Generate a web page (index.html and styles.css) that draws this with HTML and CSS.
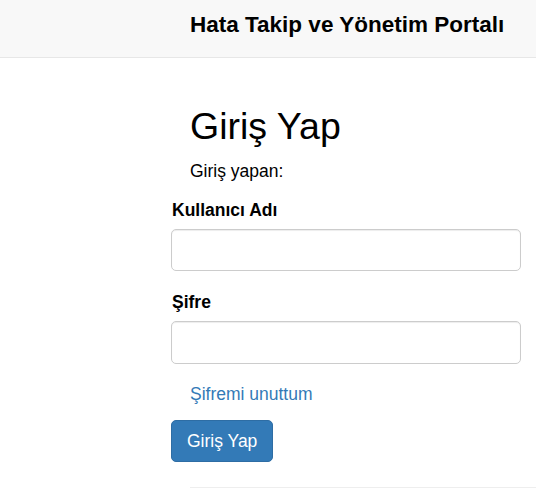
FILE: index.html
```html
<!DOCTYPE html>
<html lang="tr">
<head>
<meta charset="utf-8">
<title>Giriş Yap</title>
<link rel="stylesheet" href="styles.css">
</head>
<body>
<header class="navbar">
  <a class="brand" href="#">Hata Takip ve Yönetim Portalı</a>
</header>
<main class="content">
  <h2 class="title">Giriş Yap</h2>
  <p class="sub">Giriş yapan:</p>
  <form class="form">
    <div class="form-group">
      <label class="label" for="user">Kullanıcı Adı</label>
      <input class="input" id="user" type="text">
    </div>
    <div class="form-group">
      <label class="label" for="pass">Şifre</label>
      <input class="input" id="pass" type="password">
    </div>
    <p class="forgot"><a href="#" class="link">Şifremi unuttum</a></p>
    <button class="btn" type="button">Giriş Yap</button>
  </form>
  <hr class="rule">
</main>
</body>
</html>
```

FILE: styles.css
```css
* { box-sizing: border-box; }
html, body { margin: 0; padding: 0; }
body {
  font-family: "Liberation Sans", Arial, sans-serif;
  font-size: 17.5px;
  line-height: 25px;
  color: #000;
  background: #fff;
  overflow: hidden;
}
.navbar {
  height: 58px;
  background: #f8f8f8;
  border-bottom: 1px solid #e7e7e7;
  padding: 12px 0 0 190px;
}
.brand {
  display: block;
  font-size: 22.5px;
  font-weight: bold;
  line-height: 25px;
  color: #000;
  text-decoration: none;
}
.content {
  padding: 0 15px 0 171px;
}
.title {
  margin: 47.5px 0 12.5px 19px;
  font-size: 37.5px;
  line-height: 41.25px;
  font-weight: normal;
}
.sub {
  margin: 0 0 13.5px 19px;
}
.form { margin: 0; }
.form-group { margin-bottom: 18.75px; }
.label {
  display: block;
  font-weight: bold;
  margin: 0 0 6px 1px;
}
.input {
  display: block;
  width: 100%;
  height: 42.5px;
  border: 1px solid #ccc;
  border-radius: 5px;
  box-shadow: inset 0 1px 1px rgba(0,0,0,.075);
  font: inherit;
  padding: 7.5px 15px;
  background: #fff;
}
.forgot {
  margin: 0 0 12.5px 19px;
}
.link {
  color: #337ab7;
  text-decoration: none;
}
.btn {
  display: block;
  height: 42.5px;
  padding: 7.5px 15px;
  font: inherit;
  line-height: 25px;
  color: #fff;
  background: #337ab7;
  border: 1px solid #2e6da4;
  border-radius: 5px;
}
.rule {
  margin: 25px -15px 0 19px;
  border: 0;
  border-top: 1px solid #eee;
}
```
